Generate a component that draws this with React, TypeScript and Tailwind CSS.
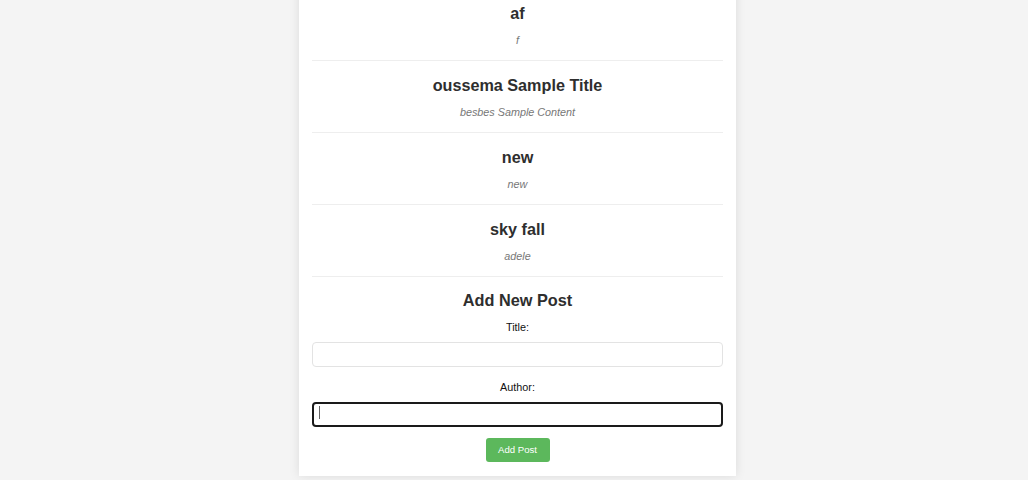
import React from "react";

const posts = [
  { title: "af", content: "f" },
  { title: "oussema Sample Title", content: "besbes Sample Content" },
  { title: "new", content: "new" },
  { title: "sky fall", content: "adele" },
];

export default function App() {
  return (
    <div
      className="min-h-screen bg-[#f4f4f4] pl-[7px]"
      style={{ fontFamily: '"Liberation Sans", Arial, sans-serif' }}
    >
      <div className="mx-auto -mt-[11px] w-[437px] bg-white px-[13px] pb-[14px] shadow-[0_0_10px_rgba(0,0,0,0.1)]">
        {posts.map((p) => (
          <div
            key={p.title}
            className="flex flex-col items-center border-b border-[#eeeeee] pt-[14px] pb-[13.5px]"
          >
            <h3 className="text-[16.2px] font-bold leading-[20px] text-[#2e2e2e]">
              {p.title}
            </h3>
            <p className="mt-[9.5px] text-[10.8px] italic leading-[14px] text-[#777777]">
              {p.content}
            </p>
          </div>
        ))}
        <form className="flex flex-col items-center" onSubmit={(e) => e.preventDefault()}>
          <h2 className="mt-[12.8px] text-[16.3px] font-bold leading-[20px] text-[#2e2e2e]">
            Add New Post
          </h2>
          <label className="mt-[10.4px] text-[10.8px] leading-[14px] text-[#111111]">
            Title:
          </label>
          <input
            type="text"
            className="mt-[7.6px] h-[25px] w-full rounded-[4px] border border-[#e3e3e3] bg-white px-[6px] text-[10.8px] outline-none"
          />
          <label className="mt-[13.4px] text-[10.8px] leading-[14px] text-[#111111]">
            Author:
          </label>
          <div className="relative mt-[7.6px] h-[25px] w-full">
            <input
              type="text"
              className="h-full w-full rounded-[4px] border-2 border-[#1a1a1a] bg-white px-[6px] text-[10.8px] outline-none"
            />
            <span className="absolute left-[7px] top-[4px] h-[13px] w-px bg-[#666666]" />
          </div>
          <button
            type="submit"
            className="mt-[11px] h-[24px] w-[64px] rounded-[3px] bg-[#5cb85c] text-[9.6px] leading-none text-white"
          >
            Add Post
          </button>
        </form>
      </div>
    </div>
  );
}
